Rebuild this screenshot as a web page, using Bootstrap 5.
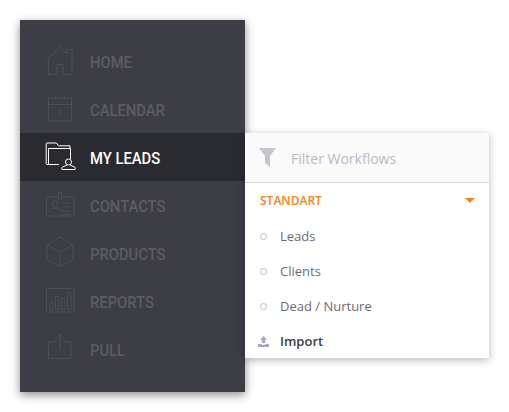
<!DOCTYPE html>
<html lang="en">
<head>
<meta charset="utf-8">
<title>My Leads</title>
<link href="https://cdn.jsdelivr.net/npm/bootstrap@5.3.0/dist/css/bootstrap.min.css" rel="stylesheet">
<style>
html,body{background:#fff;height:412px;overflow:hidden}
body{padding:20px;font-family:"Open Sans",sans-serif}
.side-panel{width:225px;height:372px;background:#3d3e45;padding:17px 0 19px;box-shadow:0 3px 9px rgba(0,0,0,.45);position:relative}
.side-row{height:48px;padding-left:24px;color:#5b5c63;text-decoration:none}
.side-row svg{width:32px;height:32px;flex:none;fill:none;stroke:#4d4e56;stroke-width:1}
.side-row svg text{fill:#4d4e56;stroke:none;font:9px "Roboto",sans-serif}
.side-label{display:inline-block;margin-left:14px;padding-top:2px;font:500 17px/1 "Roboto",sans-serif;transform:scaleX(.87);transform-origin:left center;white-space:nowrap}
.side-row.is-on{background:#2a2b30;color:#fff}
.side-row.is-on svg{stroke:#fff}
.flyout{position:absolute;left:225px;top:113px;width:244px;height:225px;background:#fff;box-shadow:0 2px 8px rgba(0,0,0,.28)}
.fly-head{height:50px;background:#fafafa;border-bottom:1px solid #d8d8da;padding-left:14px;color:#b9bac2;font-size:14px}
.fly-head span{padding-top:2px}
.fly-head svg{width:17px;height:19px;fill:#c6c7cc;margin-right:15px}
.fly-group{height:36px;padding:0 14px 0 15px;color:#ee8520;font-size:12px;font-weight:600}
.fly-caret{width:0;height:0;border:5px solid transparent;border-top:5px solid #ee8520;border-bottom:0;margin-top:-2px}
.fly-item{height:35px;padding-left:15px;color:#6b6c72;font-size:13px}
.fly-dot{width:7px;height:7px;border:1.500px solid #bdbdc2;border-radius:50%;margin-right:13px;flex:none}
.fly-item.is-strong{color:#3c3d44;font-weight:600;padding-left:13px}
.fly-item svg{width:11px;height:11px;fill:#a8a9b8;margin-right:11px}
</style>
</head>
<body>
<nav class="side-panel d-flex flex-column">
  <a class="side-row d-flex align-items-center">
    <svg viewBox="0 0 32 32"><path d="M2 15.500 16 2l7 6.700V4.500h5v9l2.500 2.500M4.500 13.500V29.500H13V19.500h6V29.500h9V13"/></svg>
    <span class="side-label">HOME</span>
  </a>
  <a class="side-row d-flex align-items-center">
    <svg viewBox="0 0 32 32"><path d="M4.500 5H27.500V28H4.500ZM4.500 11.500H27.500M11 2.500V7M21 2.500V7"/><text x="16" y="23" text-anchor="middle">1</text></svg>
    <span class="side-label">CALENDAR</span>
  </a>
  <a class="side-row is-on d-flex align-items-center">
    <svg viewBox="0 0 32 32"><path d="M15 23.500H3Q2.200 23.500 2.200 22.500V3Q2.200 2 3 2H12.500L14.500 4.800H26V7M4.500 23V7.500H26.500V18"/><circle cx="24.500" cy="21" r="3"/><path d="M23 24 18.500 26Q17 27 18 28.500H31Q32 27 30.500 26L26 24"/></svg>
    <span class="side-label">MY LEADS</span>
  </a>
  <a class="side-row d-flex align-items-center">
    <svg viewBox="0 0 32 32"><path d="M14.500 8H2.500V27H30V8H18M14.500 3.500H17.500V10H14.500Z"/><circle cx="11" cy="15" r="3"/><path d="M5 23.500Q6 19 11 19T17 23.500M18 14H26M18 18H26M18 22H26M18 25.500H26"/></svg>
    <span class="side-label">CONTACTS</span>
  </a>
  <a class="side-row d-flex align-items-center">
    <svg viewBox="0 0 32 32"><path d="M16 0 29 8V22L16 30 3 22V8ZM3 8 16 15 29 8M16 15V30"/></svg>
    <span class="side-label">PRODUCTS</span>
  </a>
  <a class="side-row d-flex align-items-center">
    <svg viewBox="0 0 32 32"><path d="M2.500 3.500H30V27H2.500ZM6 17.500H9V24.500H6ZM11.500 11.500H15V24.500H11.500ZM17.500 13.500H21V24.500H17.500ZM23.500 7.500H27V24.500H23.500Z"/></svg>
    <span class="side-label">REPORTS</span>
  </a>
  <a class="side-row d-flex align-items-center">
    <svg viewBox="0 0 32 32"><path d="M12 9H4.500V25.500H27V9H20M16 1.500V17M11 6.500 16 1.500 21 6.500"/></svg>
    <span class="side-label">PULL</span>
  </a>
  <div class="flyout">
    <div class="fly-head d-flex align-items-center">
      <svg viewBox="0 0 17 19"><path d="M0 0H17L11 8V19L6 15V8Z"/></svg>
      <span>Filter Workflows</span>
    </div>
    <div class="fly-group d-flex align-items-center justify-content-between">
      <span>STANDART</span><span class="fly-caret"></span>
    </div>
    <div class="fly-item d-flex align-items-center"><span class="fly-dot"></span>Leads</div>
    <div class="fly-item d-flex align-items-center"><span class="fly-dot"></span>Clients</div>
    <div class="fly-item d-flex align-items-center"><span class="fly-dot"></span>Dead / Nurture</div>
    <div class="fly-item is-strong d-flex align-items-center">
      <svg viewBox="0 0 11 11"><path d="M5.500 0 9 4H7V7H4V4H2ZM0 8H3.500V8.800H7.500V8H11V11H0Z"/></svg>Import
    </div>
  </div>
</nav>
<script src="https://cdn.jsdelivr.net/npm/bootstrap@5.3.0/dist/js/bootstrap.bundle.min.js"></script>
</body>
</html>
